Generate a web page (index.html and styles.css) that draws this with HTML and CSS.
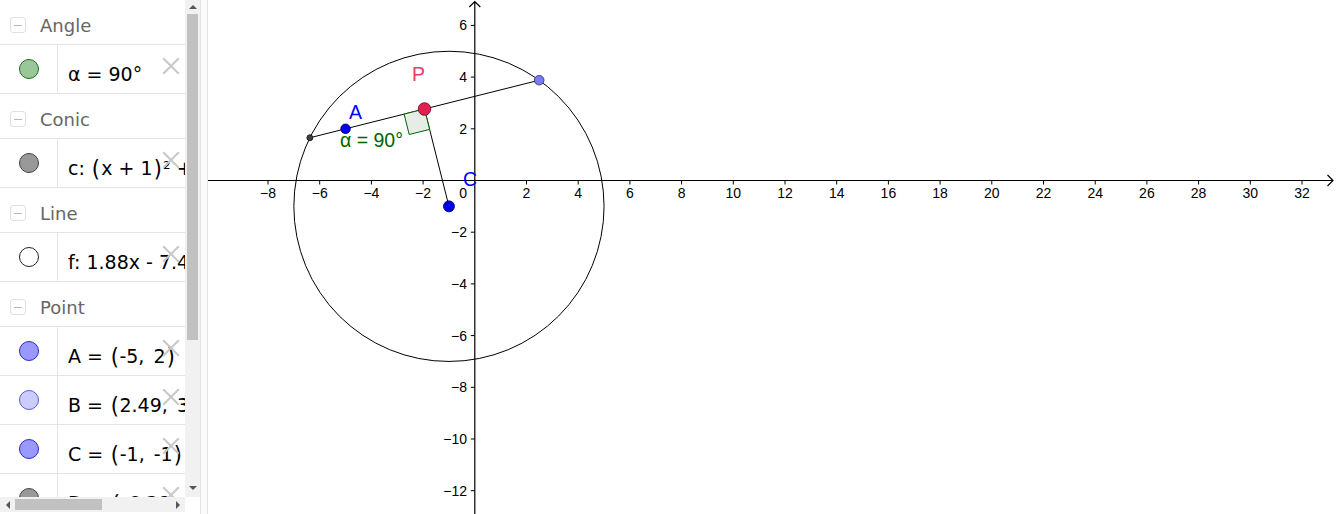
FILE: index.html
```html
<!DOCTYPE html>
<html>
<head>
<meta charset="utf-8">
<link rel="stylesheet" href="styles.css">
</head>
<body>
<div class="av">
  <div class="av-list">
    <div class="group"><span class="toggle"></span><span class="gname">Angle</span></div>
    <div class="item"><div class="mcell"><span class="marble m-angle"></span></div><div class="formula">α = 90°</div><span class="del"></span></div>
    <div class="group"><span class="toggle"></span><span class="gname">Conic</span></div>
    <div class="item"><div class="mcell"><span class="marble m-gray"></span></div><div class="formula">c: <span class="p">(</span>x + 1<span class="p">)</span>² + <span class="p">(</span>y + 1<span class="p">)</span>² = 36</div><span class="del"></span></div>
    <div class="group"><span class="toggle"></span><span class="gname">Line</span></div>
    <div class="item"><div class="mcell"><span class="marble m-white"></span></div><div class="formula">f: 1.88x - 7.49y = -24.38</div><span class="del"></span></div>
    <div class="group"><span class="toggle"></span><span class="gname">Point</span></div>
    <div class="item"><div class="mcell"><span class="marble m-blue"></span></div><div class="formula">A = <span class="p">(</span>-5,<span class="sep"> </span>2<span class="p">)</span></div><span class="del"></span></div>
    <div class="item"><div class="mcell"><span class="marble m-light"></span></div><div class="formula">B = <span class="p">(</span>2.49,<span class="sep"> </span>3.88<span class="p">)</span></div><span class="del"></span></div>
    <div class="item"><div class="mcell"><span class="marble m-blue"></span></div><div class="formula">C = <span class="p">(</span>-1,<span class="sep"> </span>-1<span class="p">)</span></div><span class="del"></span></div>
    <div class="item"><div class="mcell"><span class="marble m-gray"></span></div><div class="formula">D = <span class="p">(</span>-6.38,<span class="sep"> </span>1.65<span class="p">)</span></div><span class="del"></span></div>
  </div>
  <div class="vscroll"><span class="arr-up"></span><span class="vthumb"></span><span class="vspace"></span><span class="arr-down"></span></div>
  <div class="hscroll"><span class="arr-left"></span><span class="hthumb"></span><span class="hspace"></span><span class="arr-right"></span></div>
  <div class="corner"></div>
</div>
<div class="divider"></div>
<div class="graphics">
<svg class="plot" width="1128" height="514" viewBox="208 0 1128 514" xmlns="http://www.w3.org/2000/svg">
  <g stroke="#000" fill="none">
    <path d="M208 180.5H1333M1327.5 175L1333 180.5L1327.5 186" stroke-width="1.2"/>
    <path d="M474.8 514V1.5M469.3 7L474.8 1.5L480.3 7" stroke-width="1.2"/>
    <path stroke-width="1" d="M268 180.5v4M319.7 180.5v4M371.4 180.5v4M423.1 180.5v4M526.5 180.5v4M578.2 180.5v4M629.9 180.5v4M681.6 180.5v4M733.3 180.5v4M785 180.5v4M836.7 180.5v4M888.4 180.5v4M940.1 180.5v4M991.8 180.5v4M1043.5 180.5v4M1095.2 180.5v4M1146.9 180.5v4M1198.6 180.5v4M1250.3 180.5v4M1302 180.5v4"/>
    <path stroke-width="1" d="M474.8 25.4h-4M474.8 77.1h-4M474.8 128.8h-4M474.8 232.2h-4M474.8 283.9h-4M474.8 335.6h-4M474.8 387.3h-4M474.8 439h-4M474.8 490.7h-4"/>
  </g>
  <g class="ticklabels" text-anchor="middle">
    <text x="268" y="198">−8</text><text x="319.7" y="198">−6</text><text x="371.4" y="198">−4</text><text x="423.1" y="198">−2</text>
    <text x="526.5" y="198">2</text><text x="578.2" y="198">4</text><text x="629.9" y="198">6</text><text x="681.6" y="198">8</text>
    <text x="733.3" y="198">10</text><text x="785" y="198">12</text><text x="836.7" y="198">14</text><text x="888.4" y="198">16</text>
    <text x="940.1" y="198">18</text><text x="991.8" y="198">20</text><text x="1043.5" y="198">22</text><text x="1095.2" y="198">24</text>
    <text x="1146.9" y="198">26</text><text x="1198.6" y="198">28</text><text x="1250.3" y="198">30</text><text x="1302" y="198">32</text>
  </g>
  <g class="ticklabels" text-anchor="end">
    <text x="467" y="30.4">6</text><text x="467" y="82.1">4</text><text x="467" y="133.8">2</text><text x="467" y="198">0</text>
    <text x="467" y="237.2">−2</text><text x="467" y="288.9">−4</text><text x="467" y="340.6">−6</text><text x="467" y="392.3">−8</text>
    <text x="467" y="444">−10</text><text x="467" y="495.7">−12</text>
  </g>
  <circle cx="448.95" cy="206.35" r="155.1" fill="none" stroke="#000" stroke-width="1"/>
  <path d="M309.85 137.77L539.2 80.2M424.5 109L448.95 206.35" stroke="#000" stroke-width="1" fill="none"/>
  <polygon points="424.5,109 404.1,114.1 409.2,134.5 429.6,129.4" fill="#e6ede6" stroke="#006400" stroke-width="1"/>
  <circle cx="309.85" cy="137.77" r="3" fill="#404040" stroke="#111" stroke-width="0.8"/>
  <circle cx="345.55" cy="128.8" r="4.8" fill="#0000ee" stroke="#00004a" stroke-width="0.8"/>
  <circle cx="539.2" cy="80.2" r="4.8" fill="#7b7bf5" stroke="#2a2a60" stroke-width="0.8"/>
  <circle cx="448.95" cy="206.35" r="5.5" fill="#0000ee" stroke="#00004a" stroke-width="0.8"/>
  <circle cx="424.5" cy="109" r="6.3" fill="#e0204f" stroke="#5a0c20" stroke-width="0.8"/>
  <text class="lbl lbl-blue" x="349" y="119">A</text>
  <text class="lbl lbl-red" x="412" y="81">P</text>
  <text class="lbl lbl-blue" x="463" y="186">C</text>
  <text class="lbl lbl-green" x="340" y="147">α = 90°</text>
</svg>
</div>
</body>
</html>
```
FILE: styles.css
```css
html, body {
  margin: 0;
  padding: 0;
}
body {
  width: 1336px;
  height: 514px;
  overflow: hidden;
  display: flex;
  background: #fff;
  font-family: "DejaVu Sans", sans-serif;
}
.av {
  width: 200px;
  flex: none;
  display: grid;
  grid-template-columns: 185px 15px;
  grid-template-rows: 497px 15px 2px;
}
.av-list {
  overflow: hidden;
}
.group {
  height: 45px;
  box-sizing: border-box;
  padding-top: 6px;
  border-bottom: 1px solid #e4e4e4;
  display: flex;
  align-items: center;
}
.toggle {
  width: 14px;
  height: 14px;
  margin-left: 10px;
  border: 1px solid #e0e0e0;
  border-radius: 3px;
  display: flex;
  align-items: center;
  justify-content: center;
}
.toggle::after {
  content: "";
  width: 8px;
  height: 1px;
  background: #b8b8b8;
}
.gname {
  margin-left: 14px;
  font-size: 18px;
  color: #666;
}
.item {
  height: 49px;
  box-sizing: border-box;
  border-bottom: 1px solid #e4e4e4;
  display: flex;
  position: relative;
  white-space: nowrap;
}
.mcell {
  width: 57px;
  flex: none;
  border-right: 1px solid #e4e4e4;
  display: flex;
  align-items: center;
  justify-content: center;
}
.marble {
  width: 20px;
  height: 20px;
  box-sizing: border-box;
  border-radius: 50%;
  border: 1px solid #000;
}
.m-angle { background: #99c799; border-color: #1f6e1f; }
.m-gray { background: #999; border-color: #444; }
.m-white { background: #fff; border-color: #222; }
.m-blue { background: #9999ff; border-color: #2a2ad0; }
.m-light { background: #ccccff; border-color: #5a5ad8; }
.formula {
  padding: 17px 0 0 10px;
  font-size: 19px;
  line-height: 24px;
  color: #000;
}
.p {
  display: inline-block;
  transform: scale(1.1, 1.22);
  margin: 0 1.5px;
}
.sep {
  margin-left: 3px;
}
.del {
  position: absolute;
  left: 163px;
  top: 13px;
  width: 16px;
  height: 16px;
}
.del::before, .del::after {
  content: "";
  position: absolute;
  left: -3px;
  top: 7px;
  width: 22px;
  height: 2px;
  background: #c8c8c8;
  transform: rotate(45deg);
}
.del::after {
  transform: rotate(-45deg);
}
.vscroll {
  background: #f1f1f1;
  display: flex;
  flex-direction: column;
  align-items: center;
}
.arr-up {
  margin-top: 5px;
  border-left: 4px solid transparent;
  border-right: 4px solid transparent;
  border-bottom: 4px solid #555;
}
.vthumb {
  margin-top: 5px;
  width: 11px;
  height: 326px;
  background: #c1c1c1;
}
.vspace { flex: 1; }
.arr-down {
  margin-bottom: 7px;
  border-left: 4px solid transparent;
  border-right: 4px solid transparent;
  border-top: 4px solid #555;
}
.hscroll {
  background: #f1f1f1;
  display: flex;
  align-items: center;
}
.arr-left {
  margin-left: 6px;
  border-top: 4px solid transparent;
  border-bottom: 4px solid transparent;
  border-right: 4px solid #555;
}
.hthumb {
  margin-left: 5px;
  width: 87px;
  height: 11px;
  background: #c1c1c1;
}
.hspace { flex: 1; }
.arr-right {
  margin-right: 5px;
  border-top: 4px solid transparent;
  border-bottom: 4px solid transparent;
  border-left: 4px solid #555;
}
.corner {
  background: #fff;
}
.divider {
  width: 6px;
  flex: none;
  background: #fafafa;
  border-left: 1px solid #e2e2e2;
  border-right: 1px solid #e2e2e2;
}
.graphics {
  flex: 1;
}
.plot {
  display: block;
}
.ticklabels text {
  font-family: "Liberation Sans", Arial, sans-serif;
  font-size: 14px;
  fill: #000;
}
.lbl {
  font-family: "Liberation Sans", Arial, sans-serif;
  font-size: 19.5px;
}
.lbl-blue { fill: #0000ff; }
.lbl-red { fill: #f0386b; }
.lbl-green { fill: #006400; }
```
